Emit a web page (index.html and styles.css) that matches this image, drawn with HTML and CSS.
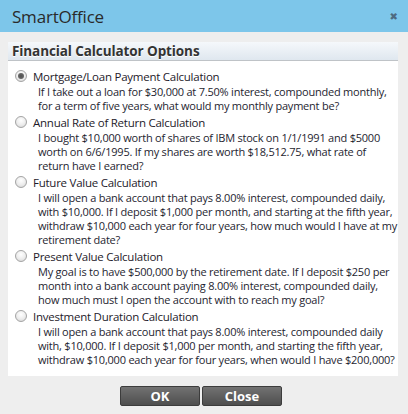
FILE: index.html
```html
<!DOCTYPE html>
<html>
<head>
<meta charset="utf-8">
<link rel="stylesheet" href="styles.css">
</head>
<body>
<div class="dialog">
  <div class="titlebar">
    <span class="title">SmartOffice</span>
    <span class="close-x">&#x2716;</span>
  </div>
  <div class="body">
    <div class="panel">
      <div class="panel-head">Financial Calculator Options</div>
      <div class="panel-content">
        <div class="option">
          <div class="label-row"><span class="radio checked"></span><span class="label">Mortgage/Loan Payment Calculation</span></div>
          <div class="desc">If I take out a loan for $30,000 at 7.50% interest, compounded monthly,<br>for a term of five years, what would my monthly payment be?</div>
        </div>
        <div class="option">
          <div class="label-row"><span class="radio"></span><span class="label">Annual Rate of Return Calculation</span></div>
          <div class="desc">I bought $10,000 worth of shares of IBM stock on 1/1/1991 and $5000<br>worth on 6/6/1995. If my shares are worth $18,512.75, what rate of<br>return have I earned?</div>
        </div>
        <div class="option">
          <div class="label-row"><span class="radio"></span><span class="label">Future Value Calculation</span></div>
          <div class="desc">I will open a bank account that pays 8.00% interest, compounded daily,<br>with $10,000. If I deposit $1,000 per month, and starting at the fifth year,<br>withdraw $10,000 each year for four years, how much would I have at my<br>retirement date?</div>
        </div>
        <div class="option">
          <div class="label-row"><span class="radio"></span><span class="label">Present Value Calculation</span></div>
          <div class="desc">My goal is to have $500,000 by the retirement date. If I deposit $250 per<br>month into a bank account paying 8.00% interest, compounded daily,<br>how much must I open the account with to reach my goal?</div>
        </div>
        <div class="option">
          <div class="label-row"><span class="radio"></span><span class="label">Investment Duration Calculation</span></div>
          <div class="desc">I will open a bank account that pays 8.00% interest, compounded daily<br>with, $10,000. If I deposit $1,000 per month, and starting the fifth year,<br>withdraw $10,000 each year for four years, when would I have $200,000?</div>
        </div>
      </div>
    </div>
    <div class="buttons">
      <button class="btn">OK</button>
      <button class="btn">Close</button>
    </div>
  </div>
</div>
</body>
</html>
```
FILE: styles.css
```css
* { box-sizing: border-box; }
html, body {
  margin: 0;
  padding: 0;
  width: 408px;
  height: 414px;
  overflow: hidden;
  font-family: "Open Sans", "DejaVu Sans", sans-serif;
}
.dialog {
  width: 408px;
  height: 414px;
  display: flex;
  flex-direction: column;
  background: #eeeeee;
}
.titlebar {
  height: 32px;
  flex: none;
  background: #7dc6ea;
  display: flex;
  align-items: center;
  justify-content: space-between;
  padding: 0 10px 0 12px;
}
.title {
  font-size: 17px;
  color: #2a2a2a;
  letter-spacing: -0.2px;
}
.close-x {
  font-size: 10px;
  color: #4e6a80;
  font-weight: bold;
}
.body {
  flex: 1;
  padding: 10px 10px 0 8px;
  display: flex;
  flex-direction: column;
}
.panel {
  background: #ffffff;
}
.panel-head {
  height: 19px;
  background: linear-gradient(#f5f8fb, #dfe7ef);
  border-bottom: 1px solid #bfc3c7;
  font-weight: bold;
  font-size: 13.5px;
  line-height: 18px;
  color: #333333;
  padding-left: 4px;
  letter-spacing: -0.1px;
  text-shadow: 0 1px 0 #ffffff;
}
.panel-content {
  padding: 6px 0 9px 7px;
}
.label-row {
  display: flex;
  align-items: center;
  height: 18px;
}
.radio {
  width: 12px;
  height: 12px;
  border-radius: 50%;
  border: 1px solid #a4a4a4;
  background: radial-gradient(circle at 50% 35%, #ffffff 0%, #ececec 55%, #cfcfcf 100%);
  margin-right: 6px;
  flex: none;
  position: relative;
}
.radio.checked::after {
  content: "";
  position: absolute;
  left: 2px;
  top: 2px;
  width: 6px;
  height: 6px;
  border-radius: 50%;
  background: radial-gradient(circle, #505050 0%, #747474 100%);
}
.label {
  font-size: 11.5px;
  letter-spacing: -0.25px;
  color: #1e1a2a;
}
.desc {
  font-size: 11px;
  letter-spacing: -0.22px;
  line-height: 14px;
  color: #1e1e30;
  padding-left: 23px;
  white-space: nowrap;
}
.buttons {
  display: flex;
  justify-content: center;
  gap: 2px;
  padding-top: 10px;
  padding-right: 4px;
}
.btn {
  width: 80px;
  height: 20px;
  border: 1px solid #3c3c3c;
  border-radius: 2px;
  background: linear-gradient(#727272, #4e4e4e);
  color: #ffffff;
  font-family: "Open Sans", sans-serif;
  font-weight: bold;
  font-size: 13px;
  line-height: 16px;
  padding: 0;
}
```
